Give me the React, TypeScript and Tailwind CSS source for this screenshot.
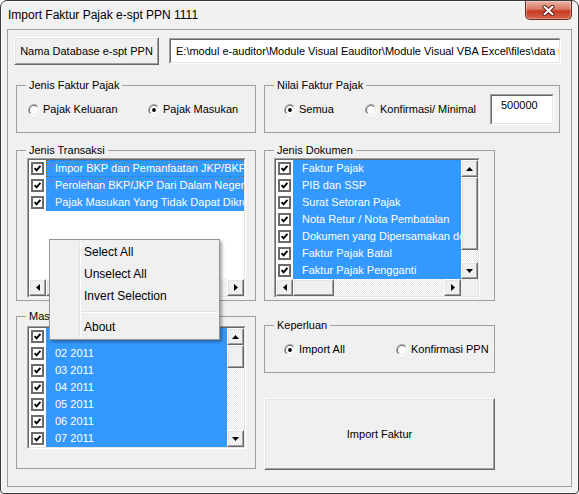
import React from "react";

// classic 3D borders used by the VBA form controls
const raisedOuter = "border border-t-white border-l-white border-r-[#696969] border-b-[#696969]";
const raisedInner = "border border-t-[#e3e3e3] border-l-[#e3e3e3] border-r-[#a0a0a0] border-b-[#a0a0a0] bg-[#f0f0f0]";
const sunkenOuter = "border border-t-[#a0a0a0] border-l-[#a0a0a0] border-r-white border-b-white";
const sunkenInner = "border border-t-[#696969] border-l-[#696969] border-r-[#e3e3e3] border-b-[#e3e3e3] bg-white";
const hatch = "bg-[image:repeating-conic-gradient(#ffffff_0_25%,#e6e6e6_0_50%)] bg-[length:2px_2px]";

function Radio({ on }: { on?: boolean }) {
  return (
    <svg width="12" height="12" viewBox="0 0 12 12" className="shrink-0">
      <defs>
        <linearGradient id="rOut" x1="0" y1="0" x2="1" y2="1">
          <stop offset="0.5" stopColor="#a0a0a0" />
          <stop offset="0.5" stopColor="#ffffff" />
        </linearGradient>
        <linearGradient id="rIn" x1="0" y1="0" x2="1" y2="1">
          <stop offset="0.5" stopColor="#696969" />
          <stop offset="0.5" stopColor="#e3e3e3" />
        </linearGradient>
      </defs>
      <circle cx="6" cy="6" r="5.5" fill="none" stroke="url(#rOut)" />
      <circle cx="6" cy="6" r="4.5" fill="#fff" stroke="url(#rIn)" />
      {on && <circle cx="6" cy="6" r="1.9" fill="#000" />}
    </svg>
  );
}

function Check() {
  return (
    <svg width="13" height="13" viewBox="0 0 13 13" className="shrink-0">
      <rect x="0" y="0" width="13" height="13" fill="#6b6b6b" />
      <rect x="2" y="2" width="9" height="9" fill="#fff" />
      <path d="M3.6 6.2 L5.6 8.4 L9.4 3.9" fill="none" stroke="#000" strokeWidth="1.9" />
    </svg>
  );
}

function Arrow({ dir }: { dir: "up" | "down" | "left" | "right" }) {
  const vertical = dir === "up" || dir === "down";
  const pts = {
    up: "3.5,0 7,4 0,4",
    down: "0,0 7,0 3.5,4",
    left: "4,0 4,7 0,3.5",
    right: "0,0 0,7 4,3.5",
  }[dir];
  return (
    <svg width={vertical ? 7 : 4} height={vertical ? 4 : 7} viewBox={vertical ? "0 0 7 4" : "0 0 4 7"}>
      <polygon points={pts} fill="#000" />
    </svg>
  );
}

function Raised({ className, children }: { className?: string; children?: React.ReactNode }) {
  return (
    <div className={`${raisedOuter} ${className ?? ""}`}>
      <div className={`${raisedInner} w-full h-full flex items-center justify-center`}>{children}</div>
    </div>
  );
}

function VScroll({ thumb }: { thumb: number }) {
  return (
    <div className="w-[17px] shrink-0 flex flex-col">
      <Raised className="h-[17px]"><Arrow dir="up" /></Raised>
      <Raised className="shrink-0">
        <div style={{ height: thumb - 4 }} />
      </Raised>
      <div className={`flex-1 ${hatch}`} />
      <Raised className="h-[17px]"><Arrow dir="down" /></Raised>
    </div>
  );
}

function HScroll({ thumb, corner }: { thumb: number; corner?: boolean }) {
  return (
    <div className="h-[17px] flex">
      <Raised className="w-[17px]"><Arrow dir="left" /></Raised>
      <Raised className="shrink-0">
        <div style={{ width: thumb - 4 }} />
      </Raised>
      <div className={`flex-1 ${hatch}`} />
      <Raised className="w-[17px]"><Arrow dir="right" /></Raised>
      {corner && <div className="w-[17px] bg-[#f0f0f0]" />}
    </div>
  );
}

function ListBox({
  items,
  className,
  vThumb,
  hThumb,
  focusFirst,
}: {
  items: string[];
  className: string;
  vThumb?: number;
  hThumb?: number;
  focusFirst?: boolean;
}) {
  return (
    <div className={`${sunkenOuter} ${className}`}>
      <div className={`${sunkenInner} flex flex-col`}>
        <div className="flex h-[119px]">
          <div className="flex-1 min-w-0 overflow-hidden">
            {items.map((t, i) => (
              <div key={t} className="flex h-[17px] items-center pl-[2px]">
                <Check />
                <div
                  className={`flex-1 h-full ml-[2px] bg-[#3399ff] text-white pl-[9px] whitespace-nowrap flex items-center ${
                    focusFirst && i === 0 ? "outline-1 outline-dotted -outline-offset-1 outline-[#a8600c]" : ""
                  }`}
                >
                  {t}
                </div>
              </div>
            ))}
          </div>
          {vThumb && <VScroll thumb={vThumb} />}
        </div>
        {hThumb && <HScroll thumb={hThumb} corner={!!vThumb} />}
      </div>
    </div>
  );
}

function Group({ title, className, children }: { title: string; className: string; children?: React.ReactNode }) {
  return (
    <fieldset className={`border border-[#a0a0a0] ${className}`}>
      <legend className="ml-[9px] px-[3px] leading-[13px]">{title}</legend>
      {children}
    </fieldset>
  );
}

export default function App() {
  return (
    <div className="w-[579px] h-[494px] bg-white font-['Liberation_Sans',Arial,sans-serif] text-[11px] text-black">
      <div className="h-full rounded-t-[7px] rounded-b-[4px] border border-[#3b3b3b] bg-[#f1f1f1] shadow-[inset_0_0_0_1px_#fbfbfb] flex flex-col px-[6px] pb-[6px]">
        {/* title bar */}
        <div className="h-[28px] flex items-start">
          <span className="pl-[1px] pt-[7px] text-[12px] leading-[15px]">Import Faktur Pajak e-spt PPN 1111</span>
          <div className="ml-auto w-[47px] h-[19px] rounded-b-[5px] border border-t-0 border-[#6a2c22] bg-[linear-gradient(#eab3a6,#d97a65_45%,#c53b22_55%,#d8644a)] shadow-[inset_0_0_0_1px_rgba(255,255,255,0.3)] flex items-center justify-center">
            <svg width="13" height="11" viewBox="0 0 13 11">
              <path d="M2.5 1.8 L10.5 9.2 M10.5 1.8 L2.5 9.2" stroke="#5b1b10" strokeWidth="4" strokeLinecap="round" />
              <path d="M2.5 1.8 L10.5 9.2 M10.5 1.8 L2.5 9.2" stroke="#fff" strokeWidth="2.2" strokeLinecap="round" />
            </svg>
          </div>
        </div>

        {/* client area */}
        <div className="flex-1 border border-[#a0a0a0] bg-[#f0f0f0] relative">
          <div className="flex mt-[7px] pl-[6px] gap-[10px]">
            <Raised className="w-[145px] h-[28px]">Nama Database e-spt PPN</Raised>
            <div className={`${sunkenOuter} w-[392px] h-[26px] mt-[1px]`}>
              <div className={`${sunkenInner} h-full flex items-center pl-[5px] overflow-hidden whitespace-nowrap`}>
                E:\modul e-auditor\Module Visual Eauditor\Module Visual VBA Excel\files\data m
              </div>
            </div>
          </div>

          <div className="flex mt-[14px] pl-[8px] gap-[8px]">
            {/* left column */}
            <div className="w-[240px] flex flex-col">
              <Group title="Jenis Faktur Pajak" className="h-[54px]">
                <div className="mt-[2px] h-[31px] flex items-center pl-[11px]">
                  <div className="w-[120px] flex items-center gap-[3px]">
                    <Radio />
                    <span>Pajak Keluaran</span>
                  </div>
                  <div className="flex items-center gap-[3px]">
                    <Radio on />
                    <span>Pajak Masukan</span>
                  </div>
                </div>
              </Group>
              <Group title="Jenis Transaksi" className="h-[157px] mt-[11px]">
                <ListBox
                  className="w-[219px] ml-[10px] mt-[1px]"
                  hThumb={140}
                  focusFirst
                  items={[
                    "Impor BKP dan Pemanfaatan JKP/BKP Tidak Berwujud",
                    "Perolehan BKP/JKP Dari Dalam Negeri",
                    "Pajak Masukan Yang Tidak Dapat Dikreditkan",
                  ]}
                />
              </Group>
              <Group title="Masa Pajak" className="h-[159px] mt-[9px]">
                <ListBox
                  className="w-[219px] ml-[10px] mt-[3px]"
                  vThumb={23}
                  items={["01 2011", "02 2011", "03 2011", "04 2011", "05 2011", "06 2011", "07 2011"]}
                />
              </Group>
            </div>

            {/* right column */}
            <div className="flex flex-col">
              <Group title="Nilai Faktur Pajak" className="w-[296px] h-[54px]">
                <div className="mt-[2px] h-[31px] flex items-center pl-[19px]">
                  <div className="w-[81px] flex items-center gap-[3px]">
                    <Radio on />
                    <span>Semua</span>
                  </div>
                  <div className="w-[125px] flex items-center gap-[3px]">
                    <Radio />
                    <span>Konfirmasi/ Minimal</span>
                  </div>
                  <div className={`${sunkenOuter} w-[64px] h-[31px]`}>
                    <div className={`${sunkenInner} h-full pl-[9px] pt-[3px] leading-[13px]`}>500000</div>
                  </div>
                </div>
              </Group>
              <Group title="Jenis Dokumen" className="w-[231px] h-[157px] mt-[11px]">
                <ListBox
                  className="w-[206px] ml-[9px] mt-[1px]"
                  vThumb={73}
                  hThumb={41}
                  items={[
                    "Faktur Pajak",
                    "PIB dan SSP",
                    "Surat Setoran Pajak",
                    "Nota Retur / Nota Pembatalan",
                    "Dokumen yang Dipersamakan dengan Faktur Pajak",
                    "Faktur Pajak Batal",
                    "Faktur Pajak Pengganti",
                  ]}
                />
              </Group>
              <Group title="Keperluan" className="w-[231px] h-[54px] mt-[18px]">
                <div className="mt-[2px] h-[31px] flex items-center pl-[19px]">
                  <div className="w-[112px] flex items-center gap-[3px]">
                    <Radio on />
                    <span>Import All</span>
                  </div>
                  <div className="flex items-center gap-[3px]">
                    <Radio />
                    <span>Konfirmasi PPN</span>
                  </div>
                </div>
              </Group>
              <Raised className="w-[231px] h-[72px] mt-[25px]">Import Faktur</Raised>
            </div>
          </div>

          {/* context menu over the list */}
          <div className="absolute left-[41px] top-[209px] w-[171px] border border-[#979797] bg-[#f0f0f0] shadow-[2px_2px_3px_rgba(0,0,0,0.35)] py-[1px] text-[12px] flex">
            <div className="w-[29px] shrink-0" />
            <div className="w-[2px] shrink-0 border-l border-l-[#e2e3e3] border-r border-r-white" />
            <div className="flex-1 flex flex-col pr-[2px]">
              <div className="h-[22px] flex items-center pl-[3px]">Select All</div>
              <div className="h-[22px] flex items-center pl-[3px]">Unselect All</div>
              <div className="h-[22px] flex items-center pl-[3px]">Invert Selection</div>
              <div className="h-[9px] flex flex-col justify-center">
                <div className="h-[1px] bg-[#e0e0e0]" />
                <div className="h-[1px] bg-white" />
              </div>
              <div className="h-[22px] flex items-center pl-[3px]">About</div>
            </div>
          </div>
        </div>
      </div>
    </div>
  );
}
